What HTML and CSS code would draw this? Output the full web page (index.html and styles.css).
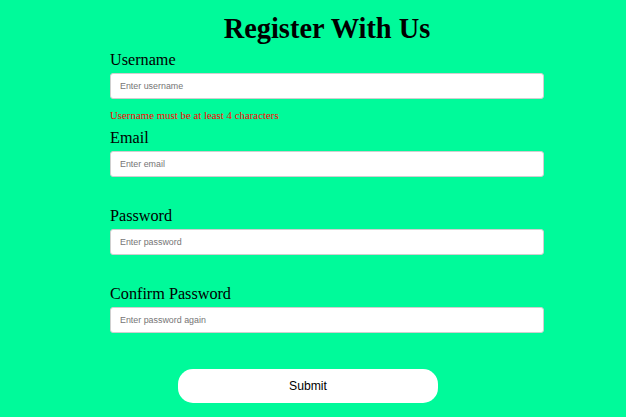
FILE: index.html
```html
<!DOCTYPE html>
<html>
<head>
<meta charset="utf-8">
<link rel="stylesheet" href="styles.css">
</head>
<body>
<form class="form">
  <h1 class="title">Register With Us</h1>
  <div class="field">
    <label class="label" for="username">Username</label>
    <input class="input" id="username" type="text" placeholder="Enter username">
    <small class="error">Username must be at least 4 characters</small>
  </div>
  <div class="field">
    <label class="label" for="email">Email</label>
    <input class="input" id="email" type="text" placeholder="Enter email">
    <small class="error"></small>
  </div>
  <div class="field">
    <label class="label" for="password">Password</label>
    <input class="input" id="password" type="password" placeholder="Enter password">
    <small class="error"></small>
  </div>
  <div class="field">
    <label class="label" for="password2">Confirm Password</label>
    <input class="input" id="password2" type="password" placeholder="Enter password again">
    <small class="error"></small>
  </div>
  <button class="submit" type="button">Submit</button>
</form>
</body>
</html>
```

FILE: styles.css
```css
html, body {
  margin: 0;
  padding: 0;
  background: #00fa9a;
  height: 100%;
}

body {
  font-family: "Liberation Serif", "Times New Roman", serif;
  color: #000;
}

.form {
  width: 434px;
  margin-left: 110px;
  display: flex;
  flex-direction: column;
}

.title {
  margin: 12px 0 6px;
  font-size: 28.4px;
  line-height: 33px;
  font-weight: bold;
  text-align: center;
}

.field {
  display: flex;
  flex-direction: column;
}

.label {
  font-size: 16.2px;
  line-height: 18px;
  margin-bottom: 4px;
}

.input {
  box-sizing: border-box;
  height: 26px;
  width: 100%;
  margin: 0;
  padding: 0 9px;
  border: 1px solid #cfcfcf;
  border-radius: 3px;
  background: #fff;
  font-family: "Liberation Sans", Arial, sans-serif;
  font-size: 8.9px;
  outline: none;
}

.input::placeholder {
  color: #757575;
}

.error {
  display: block;
  height: 13px;
  margin: 10px 0 7px;
  font-size: 10.85px;
  line-height: 13px;
  color: #ff0000;
}

.submit {
  align-self: flex-start;
  margin: 6px 0 0 68px;
  width: 260px;
  height: 34px;
  border: none;
  border-radius: 15px;
  background: #fff;
  color: #000;
  font-family: "Liberation Sans", Arial, sans-serif;
  font-size: 12.2px;
  cursor: pointer;
}
```
